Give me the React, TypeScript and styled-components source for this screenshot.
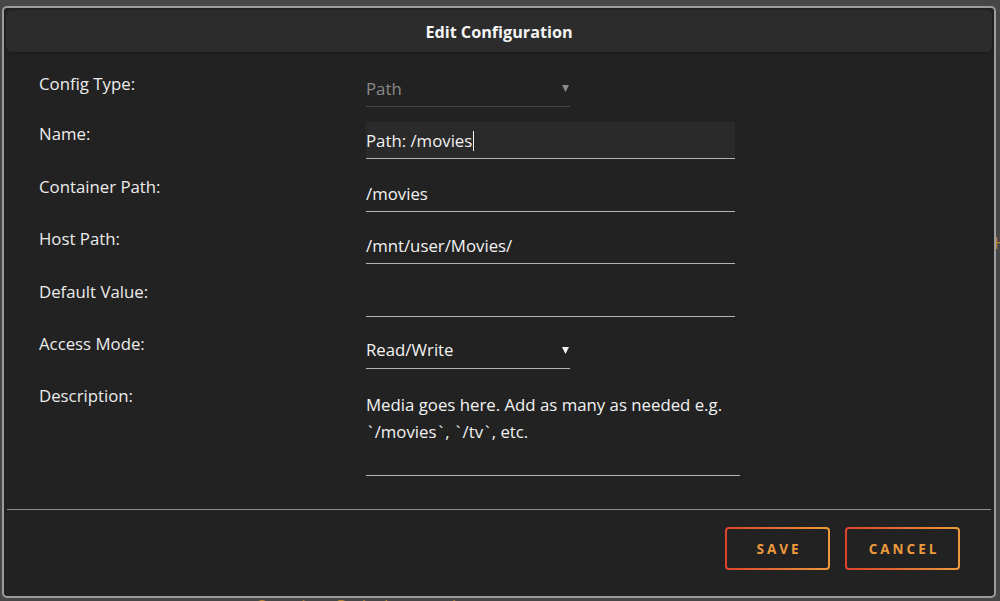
import styled, { createGlobalStyle } from "styled-components";

const GlobalStyle = createGlobalStyle`
  html, body {
    margin: 0;
    padding: 0;
    background: #474747;
    overflow: hidden;
  }
  * {
    box-sizing: border-box;
  }
`;

const colors = {
  page: "#474747",
  dialog: "#222222",
  titleBar: "#2c2c2c",
  border: "#9c9c9c",
  text: "#ececec",
  muted: "#8a8a8a",
  underline: "#b4b4b4",
  underlineDim: "#444444",
  fieldBg: "#2a2a2a",
  orange: "#ec9a3c",
  red: "#dc432a",
};

const font = `"Open Sans", "Noto Sans", "Liberation Sans", sans-serif`;

// page content sitting behind the modal
const BackgroundPage = styled.div`
  width: 1000px;
  height: 601px;
  padding-top: 232px;
  font-family: ${font};
  font-size: 16.8px;
  line-height: 22px;
  color: #b8842e;
  overflow: hidden;
  white-space: nowrap;
`;

const BackgroundLine = styled.div<{ $left: number; $top?: number }>`
  margin-left: ${(p) => p.$left}px;
  margin-top: ${(p) => p.$top ?? 0}px;
`;

const Dialog = styled.div`
  position: fixed;
  top: 6px;
  left: 2px;
  width: 994px;
  height: 592px;
  background: ${colors.dialog};
  border: 2px solid ${colors.border};
  border-radius: 5px;
  padding: 2px;
  display: flex;
  flex-direction: column;
  font-family: ${font};
  color: ${colors.text};
`;

const TitleBar = styled.div`
  height: 42px;
  padding-top: 2px;
  background: ${colors.titleBar};
  border-radius: 6px;
  display: flex;
  align-items: center;
  justify-content: center;
  font-size: 16.2px;
  font-weight: 700;
  color: #f4f4f4;
  box-shadow: 0 1px 2px rgba(0, 0, 0, 0.25);
`;

const Form = styled.div`
  display: grid;
  grid-template-columns: 327px auto;
  row-gap: 15.4px;
  align-items: start;
  padding: 18px 0 0 33px;
`;

const Label = styled.div<{ $offset?: number }>`
  font-size: 16.8px;
  line-height: 22px;
  padding-top: ${(p) => p.$offset ?? 1}px;
  color: ${colors.text};
`;

const Field = styled.div<{ $width: number; $filled?: boolean }>`
  width: ${(p) => p.$width}px;
  height: 37px;
  display: flex;
  align-items: center;
  padding-top: 1px;
  font-size: 16.8px;
  color: #f2f2f2;
  background: ${(p) => (p.$filled ? colors.fieldBg : "transparent")};
  border-bottom: 1px solid ${colors.underline};
`;

const Select = styled.div<{ $disabled?: boolean }>`
  width: 204px;
  height: 37px;
  display: flex;
  align-items: center;
  justify-content: space-between;
  padding-right: 1px;
  font-size: 16.8px;
  color: ${(p) => (p.$disabled ? colors.muted : "#f2f2f2")};
  border-bottom: 1px solid
    ${(p) => (p.$disabled ? colors.underlineDim : colors.underline)};
`;

const Caret = styled.span`
  display: inline-block;
  width: 1px;
  height: 20px;
  background: #f2f2f2;
  margin-left: 1px;
`;

const TextArea = styled.div`
  width: 374px;
  height: 92px;
  padding-top: 7px;
  font-size: 16.8px;
  line-height: 27px;
  color: #f2f2f2;
  border-bottom: 1px solid ${colors.underline};
`;

// the reference font draws backticks wide
const Tick = styled.span`
  padding: 0 2px;
`;

const Divider = styled.div`
  height: 1px;
  background: #8c8c8c;
  margin: 33px 1px 0 1px;
`;

const Footer = styled.div`
  display: flex;
  justify-content: flex-end;
  gap: 15px;
  padding: 17px 32px 0 0;
`;

const Button = styled.button<{ $width: number }>`
  width: ${(p) => p.$width}px;
  height: 43px;
  border: 2px solid transparent;
  border-radius: 4px;
  background:
    linear-gradient(${colors.dialog}, ${colors.dialog}) padding-box,
    linear-gradient(90deg, ${colors.red}, ${colors.orange}) border-box;
  color: ${colors.orange};
  font-family: ${font};
  font-size: 13.5px;
  font-weight: 700;
  letter-spacing: 3px;
  padding: 0 0 0 3px;
  cursor: pointer;
`;

function Arrow({ color }: { color: string }) {
  return (
    <svg width="7" height="8" viewBox="0 0 7 8">
      <path d="M0 1 H7 L3.5 8 Z" fill={color} />
    </svg>
  );
}

export default function App() {
  return (
    <>
      <GlobalStyle />
      <BackgroundPage>
        <BackgroundLine $left={994}>Host Path: /mnt/user/Movies/</BackgroundLine>
        <BackgroundLine $left={255} $top={341}>
          Container Path: /transcode
        </BackgroundLine>
      </BackgroundPage>

      <Dialog>
        <TitleBar>Edit Configuration</TitleBar>

        <Form>
          <Label $offset={3}>Config Type:</Label>
          <Select $disabled>
            Path
            <Arrow color="#8a8a8a" />
          </Select>

          <Label>Name:</Label>
          <Field $width={369} $filled>
            Path: /movies
            <Caret />
          </Field>

          <Label>Container Path:</Label>
          <Field $width={369}>/movies</Field>

          <Label>Host Path:</Label>
          <Field $width={369}>/mnt/user/Movies/</Field>

          <Label>Default Value:</Label>
          <Field $width={369} />

          <Label>Access Mode:</Label>
          <Select>
            Read/Write
            <Arrow color="#f2f2f2" />
          </Select>

          <Label>Description:</Label>
          <TextArea>
            Media goes here. Add as many as needed e.g.
            <br />
            <Tick>`</Tick>/movies<Tick>`</Tick>, <Tick>`</Tick>/tv<Tick>`</Tick>, etc.
          </TextArea>
        </Form>

        <Divider />

        <Footer>
          <Button $width={105}>SAVE</Button>
          <Button $width={115}>CANCEL</Button>
        </Footer>
      </Dialog>
    </>
  );
}
